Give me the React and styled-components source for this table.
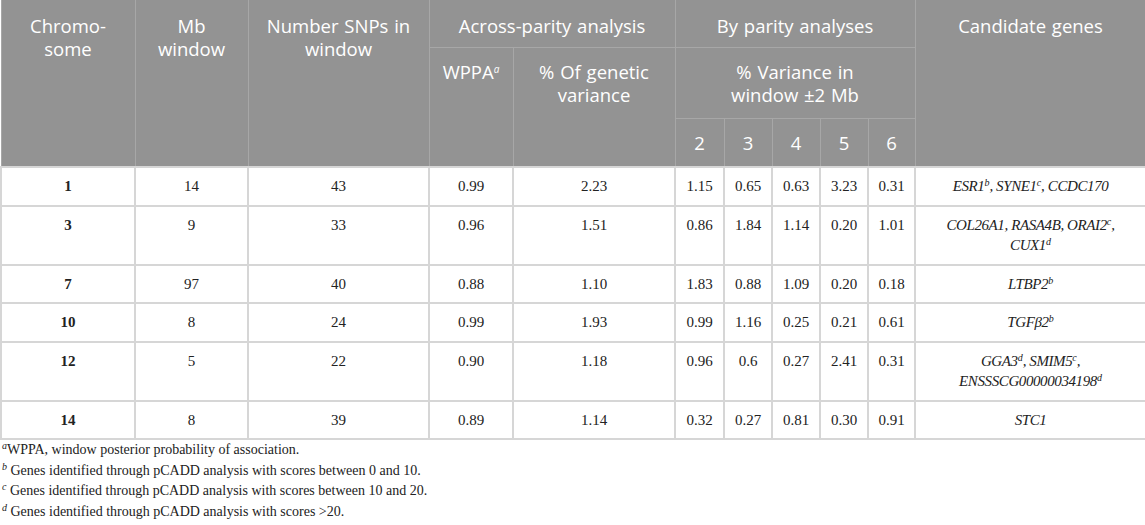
import React from "react";
import styled, { createGlobalStyle } from "styled-components";

const Global = createGlobalStyle`
  html, body { margin: 0; padding: 0; background: #ffffff; }
  #root { width: 1145px; }
`;

const Page = styled.div`
  width: 1145px;
  background: #fff;
`;

const Table = styled.table`
  width: 1145px;
  table-layout: fixed;
  border-collapse: collapse;
  border-left: 1px solid #b0b0b0;
`;

const Th = styled.th`
  background: #939393;
  color: #ffffff;
  font-family: "Open Sans", "Noto Sans", sans-serif;
  font-weight: 400;
  font-size: 18.5px;
  line-height: 23px;
  text-align: center;
  vertical-align: top;
  padding: ${(p) => (p.$first ? "14px 4px 10px" : "12px 4px 12px")};
  border: 1px solid #a7a7a7;
  border-top: none;
  word-spacing: 1px;
`;

const Td = styled.td`
  font-family: "Liberation Serif", "Times New Roman", serif;
  font-size: 15px;
  line-height: 20.5px;
  color: #222;
  text-align: center;
  vertical-align: top;
  padding: 8px 4px 8px;
  border: 2px solid #d6d6d6;
  font-weight: ${(p) => (p.$bold ? 700 : 400)};
  font-style: ${(p) => (p.$italic ? "italic" : "normal")};
  letter-spacing: ${(p) => (p.$italic ? "-0.4px" : "0")};
`;

const Sup = styled.sup`
  font-size: 10px;
  font-style: italic;
  line-height: 0;
  letter-spacing: 0;
  vertical-align: ${(p) => (p.$high ? "6px" : "5px")};
`;

const Notes = styled.div`
  font-family: "Liberation Serif", "Times New Roman", serif;
  font-size: 14px;
  line-height: 20.5px;
  color: #222;
  padding: 0 2px;
`;

const Note = styled.div``;

const widths = [134, 113, 181, 84, 162, 49, 48, 48, 48, 47, 231];

const rows = [
  {
    chr: "1", mb: "14", snps: "43", wppa: "0.99", gv: "2.23",
    p: ["1.15", "0.65", "0.63", "3.23", "0.31"],
    genes: (
      <>
        ESR1<Sup>b</Sup>, SYNE1<Sup>c</Sup>, CCDC170
      </>
    ),
  },
  {
    chr: "3", mb: "9", snps: "33", wppa: "0.96", gv: "1.51",
    p: ["0.86", "1.84", "1.14", "0.20", "1.01"],
    genes: (
      <>
        COL26A1, RASA4B, ORAI2<Sup>c</Sup>,<br />
        CUX1<Sup>d</Sup>
      </>
    ),
  },
  {
    chr: "7", mb: "97", snps: "40", wppa: "0.88", gv: "1.10",
    p: ["1.83", "0.88", "1.09", "0.20", "0.18"],
    genes: (
      <>
        LTBP2<Sup>b</Sup>
      </>
    ),
  },
  {
    chr: "10", mb: "8", snps: "24", wppa: "0.99", gv: "1.93",
    p: ["0.99", "1.16", "0.25", "0.21", "0.61"],
    genes: (
      <>
        TGFβ2<Sup>b</Sup>
      </>
    ),
  },
  {
    chr: "12", mb: "5", snps: "22", wppa: "0.90", gv: "1.18",
    p: ["0.96", "0.6", "0.27", "2.41", "0.31"],
    genes: (
      <>
        GGA3<Sup>d</Sup>, SMIM5<Sup>c</Sup>,<br />
        ENSSSCG00000034198<Sup>d</Sup>
      </>
    ),
  },
  {
    chr: "14", mb: "8", snps: "39", wppa: "0.89", gv: "1.14",
    p: ["0.32", "0.27", "0.81", "0.30", "0.91"],
    genes: <>STC1</>,
  },
];

export default function App() {
  return (
    <Page>
      <Global />
      <Table>
        <colgroup>
          {widths.map((w, i) => (
            <col key={i} style={{ width: w }} />
          ))}
        </colgroup>
        <thead>
          <tr>
            <Th $first rowSpan={3}>Chromo-<br />some</Th>
            <Th $first rowSpan={3}>Mb<br />window</Th>
            <Th $first rowSpan={3}>Number SNPs in<br />window</Th>
            <Th $first colSpan={2}>Across-parity analysis</Th>
            <Th $first colSpan={5}>By parity analyses</Th>
            <Th $first rowSpan={3}>Candidate genes</Th>
          </tr>
          <tr>
            <Th rowSpan={2}>
              WPPA<Sup $high>a</Sup>
            </Th>
            <Th rowSpan={2}>% Of genetic<br />variance</Th>
            <Th colSpan={5}>% Variance in<br />window ±2 Mb</Th>
          </tr>
          <tr>
            {["2", "3", "4", "5", "6"].map((n) => (
              <Th key={n}>{n}</Th>
            ))}
          </tr>
        </thead>
        <tbody>
          {rows.map((r) => (
            <tr key={r.chr}>
              <Td $bold>{r.chr}</Td>
              <Td>{r.mb}</Td>
              <Td>{r.snps}</Td>
              <Td>{r.wppa}</Td>
              <Td>{r.gv}</Td>
              {r.p.map((v, i) => (
                <Td key={i}>{v}</Td>
              ))}
              <Td $italic>{r.genes}</Td>
            </tr>
          ))}
        </tbody>
      </Table>
      <Notes>
        <Note>
          <Sup>a</Sup>WPPA, window posterior probability of association.
        </Note>
        <Note>
          <Sup>b</Sup> Genes identified through pCADD analysis with scores between 0 and 10.
        </Note>
        <Note>
          <Sup>c</Sup> Genes identified through pCADD analysis with scores between 10 and 20.
        </Note>
        <Note>
          <Sup>d</Sup> Genes identified through pCADD analysis with scores &gt;20.
        </Note>
      </Notes>
    </Page>
  );
}
